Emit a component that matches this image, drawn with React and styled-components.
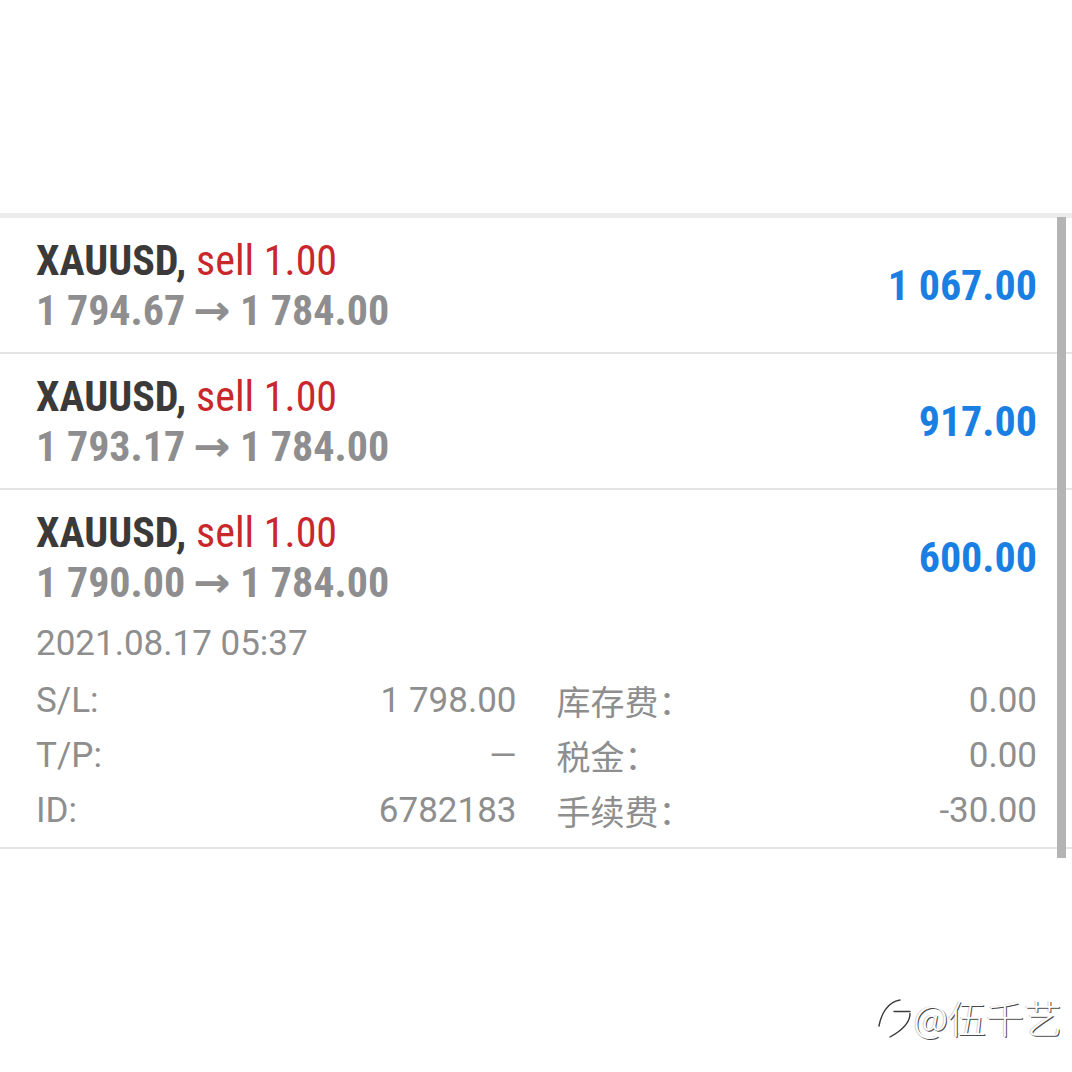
import styled, { createGlobalStyle } from 'styled-components';

const GlobalStyle = createGlobalStyle`
  html, body {
    margin: 0;
    padding: 0;
    background: #ffffff;
  }
  body {
    font-family: Roboto, 'Noto Sans CJK SC', sans-serif;
  }
`;

const positions = [
  { symbol: 'XAUUSD', side: 'sell 1.00', open: '1 794.67', close: '1 784.00', profit: '1 067.00' },
  { symbol: 'XAUUSD', side: 'sell 1.00', open: '1 793.17', close: '1 784.00', profit: '917.00' },
  {
    symbol: 'XAUUSD',
    side: 'sell 1.00',
    open: '1 790.00',
    close: '1 784.00',
    profit: '600.00',
    time: '2021.08.17 05:37',
    details: [
      ['S/L:', '1 798.00', '库存费：', '0.00'],
      ['T/P:', '—', '税金：', '0.00'],
      ['ID:', '6782183', '手续费：', '-30.00'],
    ],
  },
];

export default function App() {
  return (
    <>
      <GlobalStyle />
      <Page>
        <List>
          {positions.map((p, i) => (
            <Row key={i} $expanded={!!p.details}>
              <Head>
                <Lines>
                  <Title>
                    {p.symbol}, <Side>{p.side}</Side>
                  </Title>
                  <Prices>
                    {p.open}
                    <Arrow>→</Arrow>
                    {p.close}
                  </Prices>
                </Lines>
                <Profit>{p.profit}</Profit>
              </Head>
              {p.details && (
                <>
                  <Time>{p.time}</Time>
                  <Details>
                    {p.details.map((d, j) => (
                      <DetailLine key={j}>
                        <Pair>
                          <span>{d[0]}</span>
                          <span>{d[1]}</span>
                        </Pair>
                        <Pair>
                          <Cjk>{d[2]}</Cjk>
                          <span>{d[3]}</span>
                        </Pair>
                      </DetailLine>
                    ))}
                  </Details>
                </>
              )}
            </Row>
          ))}
          <Scrollbar />
        </List>
        <Watermark>
          <svg width="40" height="48" viewBox="0 0 40 48" fill="none">
            <g stroke="#3a3a3a" strokeWidth="1.4" strokeLinecap="round" fill="none">
              <path d="M6 33C8 22 14 9 27 7" />
              <path d="M21 18.5H37" />
              <path d="M37 20.5C37 31 28 38 17 44" />
            </g>
          </svg>
          <WaterText>@伍千艺</WaterText>
        </Watermark>
      </Page>
    </>
  );
}

const Page = styled.div`
  padding-top: 213px;
  min-height: 1072px;
  box-sizing: border-box;
`;

const List = styled.div`
  position: relative;
  border-top: 5px solid #ececec;
`;

const Row = styled.div`
  padding: 18px 35px ${(p) => (p.$expanded ? '9px' : '12px')} 36px;
  border-bottom: 2px solid #e4e4e4;
  min-height: 104px;
`;

const Head = styled.div`
  display: flex;
  align-items: center;
  justify-content: space-between;
`;

const Lines = styled.div`
  display: flex;
  flex-direction: column;
`;

const Condensed = styled.div`
  font-family: 'Roboto Condensed', 'Liberation Sans Narrow', Roboto, sans-serif;
  font-stretch: condensed;
  font-weight: 700;
  font-size: 42px;
  line-height: 50px;
  white-space: nowrap;
`;

const Title = styled(Condensed)`
  color: #3a3a3a;
`;

const Side = styled.span`
  color: #c8282c;
  font-weight: 400;
`;

const Prices = styled(Condensed)`
  color: #8e8e90;
`;

const Arrow = styled.span`
  display: inline-block;
  font-family: 'DejaVu Sans', sans-serif;
  font-weight: 700;
  font-size: 42px;
  line-height: 42px;
  margin: 0 12px 0 11px;
  transform: scaleX(1.18);
`;

const Profit = styled(Condensed)`
  color: #1a7fe2;
`;

const Time = styled.div`
  margin-top: 8px;
  font-size: 35px;
  line-height: 55px;
  color: #8e8e8e;
`;

const Details = styled.div`
  margin-top: 2px;
  display: flex;
  flex-direction: column;
`;

const DetailLine = styled.div`
  display: grid;
  grid-template-columns: 1fr 1fr;
  column-gap: 40px;
  font-size: 35px;
  line-height: 55px;
  color: #8e8e8e;
`;

const Pair = styled.div`
  display: flex;
  justify-content: space-between;
`;

const Cjk = styled.span`
  font-family: 'Noto Sans CJK SC', sans-serif;
  font-size: 34px;
`;

const Scrollbar = styled.div`
  position: absolute;
  top: -1px;
  right: 6px;
  width: 9px;
  height: 641px;
  background: #b4b4b4;
`;

const Watermark = styled.div`
  display: flex;
  justify-content: flex-end;
  align-items: center;
  gap: 0;
  margin-top: 140px;
  padding-right: 10px;
`;

const WaterText = styled.span`
  font-family: 'Noto Sans CJK SC', sans-serif;
  font-weight: 300;
  font-size: 38px;
  color: #ffffff;
  text-shadow: 1px 1px 0 #4a4a4a, -1px 0 0 #d0d0d0;
`;
